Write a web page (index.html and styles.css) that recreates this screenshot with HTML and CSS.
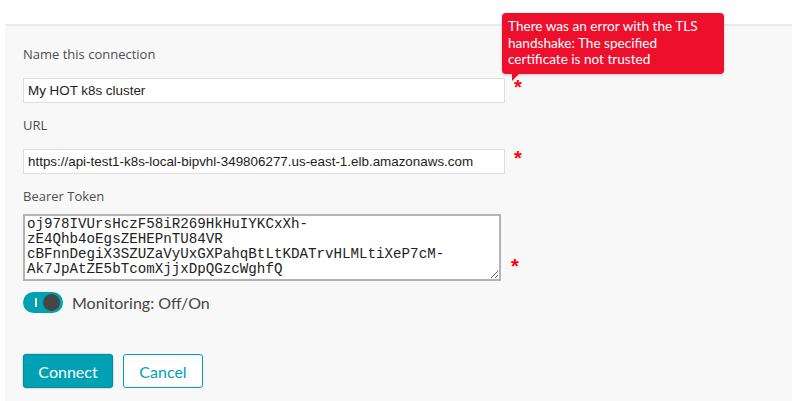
FILE: index.html
```html
<!DOCTYPE html>
<html>
<head>
<meta charset="utf-8">
<link rel="stylesheet" href="styles.css">
</head>
<body>
<div class="page">
  <div class="panel">
    <div class="field">
      <label class="label">Name this connection</label>
      <div class="row">
        <input class="input" type="text" value="My HOT k8s cluster">
        <span class="req">*</span>
      </div>
    </div>
    <div class="field">
      <label class="label">URL</label>
      <div class="row">
        <input class="input" type="text" value="https://api-test1-k8s-local-bipvhl-349806277.us-east-1.elb.amazonaws.com">
        <span class="req">*</span>
      </div>
    </div>
    <div class="field">
      <label class="label label-ta">Bearer Token</label>
      <div class="row row-ta">
        <textarea class="textarea" rows="4">oj978IVUrsHczF58iR269HkHuIYKCxXh-
zE4Qhb4oEgsZEHEPnTU84VR
cBFnnDegiX3SZUZaVyUxGXPahqBtLtKDATrvHLMLtiXeP7cM-
Ak7JpAtZE5bTcomXjjxDpQGzcWghfQ</textarea>
        <span class="req req-ta">*</span>
      </div>
    </div>
    <div class="toggle-row">
      <span class="toggle"><span class="toggle-i"></span><span class="knob"></span></span>
      <span class="toggle-label">Monitoring: Off/On</span>
    </div>
    <div class="actions">
      <button class="btn btn-primary">Connect</button>
      <button class="btn btn-secondary">Cancel</button>
    </div>
  </div>
  <div class="tooltip">There was an error with the TLS handshake: The specified certificate is not trusted</div>
</div>
</body>
</html>
```
FILE: styles.css
```css
html, body {
  margin: 0;
  padding: 0;
  background: #ffffff;
}
body {
  font-family: "Open Sans", "Noto Sans", sans-serif;
  color: #454646;
}
.page {
  position: relative;
  padding-top: 24px;
  padding-left: 5px;
  height: 377px;
  overflow: hidden;
}
.panel {
  background: #f8f8f8;
  border-top: 2px solid #ebebeb;
  height: 100%;
  padding-left: 18px;
  padding-top: 19px;
  box-sizing: border-box;
}
.field {
  display: flex;
  flex-direction: column;
}
.label {
  font-size: 13px;
  line-height: 18px;
  color: #4f4f4f;
  margin-bottom: 15px;
}
.field + .field .label {
  margin-top: 13px;
}
.field .label-ta {
  margin-bottom: 9px;
}
.row {
  display: flex;
  align-items: flex-start;
}
.input {
  width: 482px;
  height: 25px;
  box-sizing: border-box;
  border: 1px solid #dedede;
  background: #fff;
  font-family: "Liberation Sans", Arial, sans-serif;
  font-size: 13.4px;
  color: #222;
  padding: 0 0 0 4px;
  margin: 0;
  outline: none;
}
.req {
  color: #ff0000;
  font-family: "Liberation Sans", Arial, sans-serif;
  font-size: 20px;
  font-weight: bold;
  line-height: 20px;
  margin-left: 9px;
  margin-top: -1px;
}
.row-ta {
  align-items: flex-end;
}
.textarea {
  width: 478px;
  height: 67px;
  box-sizing: border-box;
  border: 2px solid #b3b3b3;
  background: #fff;
  font-family: "Liberation Mono", "Courier New", monospace;
  font-size: 14.2px;
  line-height: 15px;
  color: #222;
  padding: 1px 2px 0 2px;
  margin: 0;
  resize: both;
  outline: none;
  overflow: hidden;
  white-space: pre;
}
.req-ta {
  margin-left: 10px;
  margin-bottom: 5px;
}
.toggle-row {
  display: flex;
  align-items: center;
  margin-top: 11px;
}
.toggle {
  position: relative;
  display: inline-block;
  width: 40px;
  height: 21px;
  border-radius: 11px;
  background: #00a1b2;
}
.toggle-i {
  position: absolute;
  left: 12px;
  top: 6px;
  width: 2px;
  height: 9px;
  background: #fff;
}
.knob {
  position: absolute;
  right: 3px;
  top: 2px;
  width: 17px;
  height: 17px;
  border-radius: 50%;
  background: #454646;
}
.toggle-label {
  margin-left: 9px;
  font-family: "Lato", "Open Sans", sans-serif;
  font-size: 16px;
  color: #454646;
}
.actions {
  display: flex;
  gap: 10px;
  margin-top: 41px;
}
.btn {
  font-family: "Lato", "Open Sans", sans-serif;
  font-size: 16px;
  height: 34px;
  box-sizing: border-box;
  border-radius: 3px;
  margin: 0;
  padding: 0;
  cursor: pointer;
}
.btn-primary {
  width: 90px;
  background: #00a1b2;
  color: #fff;
  border: 1px solid #008c9c;
  box-shadow: 0 0 2px rgba(0,0,0,0.35);
}
.btn-secondary {
  width: 80px;
  background: #fff;
  color: #00a1b2;
  border: 1px solid #00a1b2;
}
.tooltip {
  position: absolute;
  left: 502px;
  top: 13px;
  width: 222px;
  box-sizing: border-box;
  padding: 5px 22px 6px 6px;
  background: #ee0f2d;
  color: #fff;
  font-family: "Lato", "Open Sans", sans-serif;
  font-size: 13.6px;
  line-height: 16.5px;
  border-radius: 4px;
  box-shadow: 0 1px 3px rgba(0,0,0,0.2);
}
.tooltip::after {
  content: "";
  position: absolute;
  left: 10px;
  bottom: -7px;
  border-left: 0 solid transparent;
  border-right: 8px solid transparent;
  border-top: 8px solid #ee0f2d;
}
```
